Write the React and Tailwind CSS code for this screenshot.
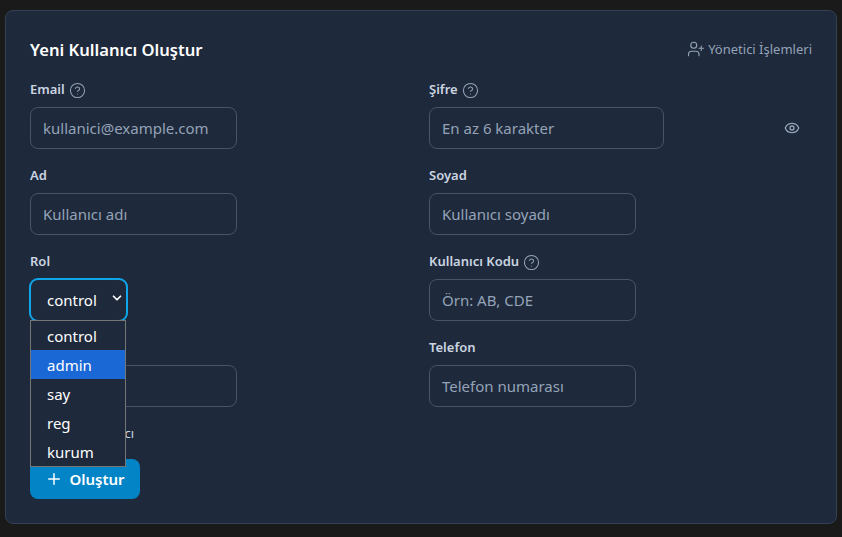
import React from "react";
import { CircleHelp, Eye, Plus, UserPlus, ChevronDown } from "lucide-react";

const inputClass =
  "block h-[42px] rounded-lg border border-[#475569] bg-transparent px-3 text-[15px] text-white placeholder:text-[#94a3b8] outline-none";

function Label({ children, help }) {
  return (
    <label className="mb-2 block h-5 text-[13px] leading-5 font-semibold text-[#cbd5e1]">
      {children}
      {help && <CircleHelp size={17} strokeWidth={1.5} className="ml-1 inline text-[#94a3b8]" />}
    </label>
  );
}

function Field({ label, help, placeholder, width = "w-[207px]", type = "text" }) {
  return (
    <div>
      <Label help={help}>{label}</Label>
      <input type={type} placeholder={placeholder} className={`${inputClass} ${width}`} />
    </div>
  );
}

const roles = ["control", "admin", "say", "reg", "kurum"];

function RoleSelect() {
  return (
    <div className="relative">
      <Label>Rol</Label>
      <div className="relative h-[42px] w-[97px]">
        <select
          defaultValue="control"
          className="-m-px block h-[44px] w-[99px] appearance-none rounded-[9px] border-2 border-[#0ea5e9] bg-transparent pl-4 text-[15px] text-white outline-none"
        >
          {roles.map((r) => (
            <option key={r}>{r}</option>
          ))}
        </select>
        <ChevronDown size={14} strokeWidth={3} className="pointer-events-none absolute top-[13px] right-[3px] text-white" />
      </div>
      {/* open native list, sits over the fields below */}
      <ul className="absolute top-[69px] left-0 z-10 w-[96px] border border-[#767676] bg-[#1e293b] text-[15px] text-white">
        {roles.map((r) => (
          <li key={r} className={`h-[29px] pt-px pl-4 leading-[29px] ${r === "admin" ? "bg-[#1a67d6]" : ""}`}>
            {r}
          </li>
        ))}
      </ul>
    </div>
  );
}

export default function App() {
  return (
    <div className="min-h-[537px] bg-[#1a1a1a] px-[5px] pt-[10px] font-['Noto_Sans',sans-serif]">
      <div className="rounded-lg border border-[#334155] bg-[#1e293b] p-6">
        <div className="mb-4 flex h-7 items-center justify-between">
          <h2 className="mt-[3px] text-[16.6px] font-semibold text-white">Yeni Kullanıcı Oluştur</h2>
          <button className="flex items-center gap-[3px] text-[13px] text-[#94a3b8]">
            <UserPlus size={18} strokeWidth={1.5} />
            <span className="pt-px">Yönetici İşlemleri</span>
          </button>
        </div>

        <div className="grid grid-cols-2 gap-x-4 gap-y-4">
          <Field label="Email" help placeholder="kullanici@example.com" type="email" />
          <div>
            <Label help>Şifre</Label>
            <div className="relative">
              <input type="password" placeholder="En az 6 karakter" className={`${inputClass} w-[235px]`} />
              <Eye size={16} className="absolute top-[13px] right-3 text-[#94a3b8]" />
            </div>
          </div>
          <Field label="Ad" placeholder="Kullanıcı adı" />
          <Field label="Soyad" placeholder="Kullanıcı soyadı" />
          <RoleSelect />
          <Field label="Kullanıcı Kodu" help placeholder="Örn: AB, CDE" />
          <Field label="Kurum" placeholder="Kurum" />
          <Field label="Telefon" placeholder="Telefon numarası" />
        </div>

        <div className="mt-4 mb-4 flex h-5 items-center gap-1.5 pt-0.5 text-[13px] text-[#cbd5e1]">
          <input type="checkbox" className="h-4 w-4" />
          <span>Aktif Kullanıcı</span>
        </div>

        <button className="flex h-10 w-[110px] items-center justify-center gap-1.5 rounded-lg bg-[#0284c7] text-[15px] font-semibold text-white">
          <Plus size={18} />
          Oluştur
        </button>
      </div>
    </div>
  );
}
